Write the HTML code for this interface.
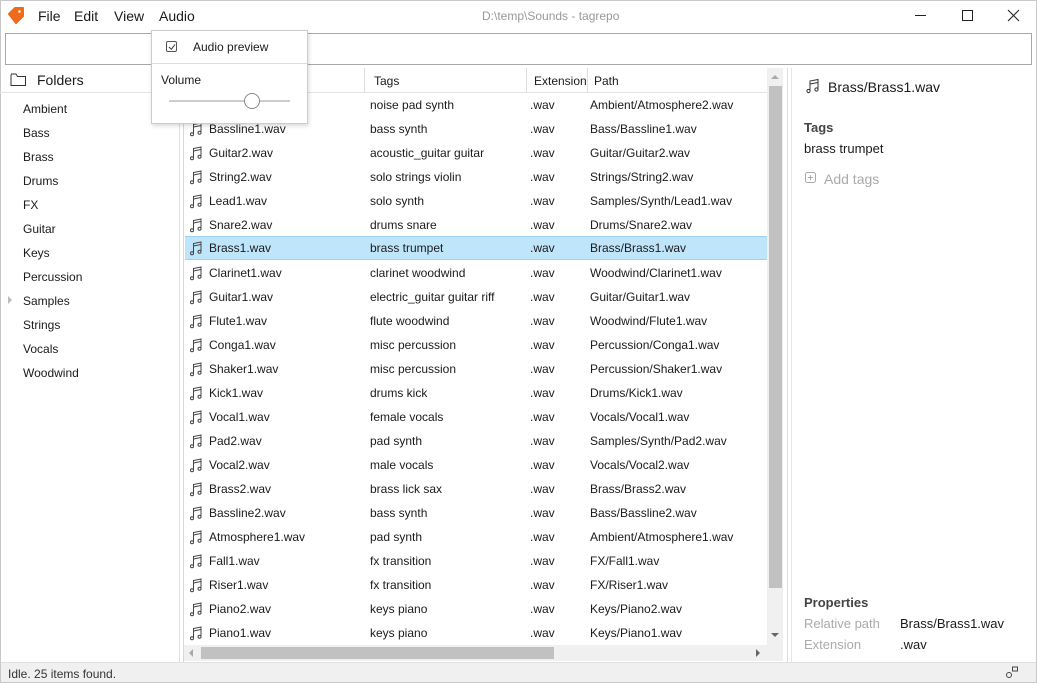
<!DOCTYPE html>
<html><head><meta charset="utf-8"><style>
*{margin:0;padding:0;box-sizing:border-box}
body{width:1037px;height:683px;background:#fff;font-family:"Liberation Sans","DejaVu Sans",sans-serif;color:#1a1a1a;position:relative;overflow:hidden;font-size:12px}
.a{position:absolute;white-space:nowrap}
.row{position:absolute;left:185px;width:582px;height:24px;line-height:24px}
.row span{position:absolute}
.sel{background:#bfe5fb;border-top:1px solid #9dd3f5;border-bottom:1px solid #9dd3f5;line-height:22px}
.ic{position:absolute;left:5px;top:5px}
.sel .ic{top:4px}
</style></head><body>
<div class="a" style="left:0;top:0;width:1037px;height:683px;border:1px solid #c8c8c8"></div>
<svg class="a" style="left:7px;top:7px" width="18" height="18" viewBox="0 0 18 18"><path d="M2 7 L8 1 L16 1 L16 9 L9 16 Z" fill="#f06a1c" stroke="#f06a1c" stroke-linejoin="round" stroke-width="2"/><circle cx="12.5" cy="4.5" r="1.3" fill="#fff"/></svg>
<div class="a" style="left:38px;top:8px;font-size:14px">File</div>
<div class="a" style="left:74px;top:8px;font-size:14px">Edit</div>
<div class="a" style="left:114px;top:8px;font-size:14px">View</div>
<div class="a" style="left:159px;top:8px;font-size:14px">Audio</div>
<div class="a" style="left:482px;top:9px;font-size:12px;color:#999">D:\temp\Sounds - tagrepo</div>
<div class="a" style="left:915px;top:15px;width:11px;height:1px;background:#222"></div>
<div class="a" style="left:962px;top:10px;width:11px;height:11px;border:1px solid #222"></div>
<svg class="a" style="left:1007px;top:9px" width="13" height="13"><path d="M1 1L12 12M12 1L1 12" stroke="#222" stroke-width="1.1"/></svg>
<div class="a" style="left:5px;top:33px;width:1027px;height:32px;border:1px solid #a8a8a8"></div>
<svg class="a" style="left:10px;top:72px" width="17" height="15"><path d="M1 3.5V13.5H15.5V4.5H7.5L6 2H1.5Z" fill="none" stroke="#333" stroke-width="1"/></svg>
<div class="a" style="left:37px;top:72px;font-size:14px">Folders</div>
<div class="a" style="left:0;top:92px;width:178px;height:1px;background:#e3e3e3"></div>
<div class="a" style="left:23px;top:97px;line-height:24px">Ambient<br>Bass<br>Brass<br>Drums<br>FX<br>Guitar<br>Keys<br>Percussion<br>Samples<br>Strings<br>Vocals<br>Woodwind</div>
<div class="a" style="left:8px;top:296px;width:0;height:0;border-left:4px solid #bbb;border-top:4px solid transparent;border-bottom:4px solid transparent"></div>
<div class="a" style="left:179px;top:68px;width:1px;height:594px;background:#e0e0e0"></div>
<div class="a" style="left:183px;top:68px;width:1px;height:594px;background:#d8d8d8"></div>
<div class="a" style="left:184px;top:92px;width:583px;height:1px;background:#e3e3e3"></div>
<div class="a" style="left:364px;top:68px;width:1px;height:24px;background:#ddd"></div>
<div class="a" style="left:526px;top:68px;width:1px;height:24px;background:#ddd"></div>
<div class="a" style="left:587px;top:68px;width:1px;height:24px;background:#ddd"></div>
<div class="a" style="left:374px;top:74px">Tags</div>
<div class="a" style="left:534px;top:74px">Extension</div>
<div class="a" style="left:594px;top:74px">Path</div>
<div id="rows"></div>
<div class="a" style="left:767px;top:68px;width:16px;height:577px;background:#f0f0f0"></div>
<div class="a" style="left:769px;top:86px;width:13px;height:502px;background:#c1c1c1"></div>
<div class="a" style="left:771px;top:75px;border-bottom:4px solid #aaa;border-left:4px solid transparent;border-right:4px solid transparent"></div>
<div class="a" style="left:771px;top:633px;border-top:4px solid #666;border-left:4px solid transparent;border-right:4px solid transparent"></div>
<div class="a" style="left:184px;top:645px;width:583px;height:16px;background:#f0f0f0"></div>
<div class="a" style="left:767px;top:645px;width:16px;height:16px;background:#f0f0f0"></div>
<div class="a" style="left:201px;top:647px;width:353px;height:12px;background:#c1c1c1"></div>
<div class="a" style="left:189px;top:649px;border-right:4px solid #aaa;border-top:4px solid transparent;border-bottom:4px solid transparent"></div>
<div class="a" style="left:756px;top:649px;border-left:4px solid #666;border-top:4px solid transparent;border-bottom:4px solid transparent"></div>
<div class="a" style="left:787px;top:68px;width:1px;height:594px;background:#ddd"></div>
<div class="a" style="left:791px;top:68px;width:1px;height:594px;background:#e6e6e6"></div>
<svg class="a" style="left:806px;top:78px" width="14" height="16" viewBox="0 0 14 16"><path d="M4 13V3L12 1.5V11M4 6L12 4.5" fill="none" stroke="#333"/><circle cx="2.5" cy="13" r="1.6" fill="none" stroke="#333"/><circle cx="10.5" cy="11.5" r="1.6" fill="none" stroke="#333"/></svg>
<div class="a" style="left:828px;top:79px;font-size:14px">Brass/Brass1.wav</div>
<div class="a" style="left:804px;top:120px;font-size:13px;font-weight:bold;color:#444">Tags</div>
<div class="a" style="left:804px;top:141px;font-size:13px">brass trumpet</div>
<svg class="a" style="left:805px;top:172px" width="13" height="13"><rect x="0.5" y="0.5" width="10" height="10" rx="2" fill="none" stroke="#aaa"/><path d="M5.5 3v5M3 5.5h5" stroke="#aaa"/></svg>
<div class="a" style="left:824px;top:171px;font-size:14px;color:#aaa">Add tags</div>
<div class="a" style="left:804px;top:595px;font-size:13px;font-weight:bold;color:#444">Properties</div>
<div class="a" style="left:804px;top:616px;font-size:13px;color:#aaa">Relative path</div>
<div class="a" style="left:900px;top:616px;font-size:13px">Brass/Brass1.wav</div>
<div class="a" style="left:804px;top:637px;font-size:13px;color:#aaa">Extension</div>
<div class="a" style="left:900px;top:637px;font-size:13px">.wav</div>
<div class="a" style="left:1px;top:662px;width:1035px;height:20px;background:#f0f0f0;border-top:1px solid #e0e0e0"></div>
<div class="a" style="left:8px;top:667px;color:#333">Idle. 25 items found.</div>
<svg class="a" style="left:1005px;top:665px" width="14" height="14"><circle cx="4" cy="10" r="2.5" fill="none" stroke="#444"/><rect x="7.5" y="2" width="5" height="4" fill="none" stroke="#444"/></svg>
<div class="a" style="left:151px;top:30px;width:157px;height:94px;background:#fff;border:1px solid #ccc;box-shadow:1px 2px 4px rgba(0,0,0,.15)"></div>
<div class="a" style="left:166px;top:41px;width:11px;height:11px;border:1px solid #555;border-radius:2px"></div>
<svg class="a" style="left:168px;top:43px" width="8" height="8"><path d="M1 4L3.3 6.3L7 1.5" fill="none" stroke="#333"/></svg>
<div class="a" style="left:193px;top:40px;font-size:12px">Audio preview</div>
<div class="a" style="left:152px;top:63px;width:155px;height:1px;background:#ddd"></div>
<div class="a" style="left:161px;top:73px">Volume</div>
<div class="a" style="left:169px;top:100px;width:121px;height:2px;background:#ccc"></div>
<div class="a" style="left:244px;top:93px;width:16px;height:16px;border-radius:50%;background:#fff;border:1px solid #888"></div>
<script>
var d=[["Atmosphere2.wav","noise pad synth","Ambient/Atmosphere2.wav"],["Bassline1.wav","bass synth","Bass/Bassline1.wav"],["Guitar2.wav","acoustic_guitar guitar","Guitar/Guitar2.wav"],["String2.wav","solo strings violin","Strings/String2.wav"],["Lead1.wav","solo synth","Samples/Synth/Lead1.wav"],["Snare2.wav","drums snare","Drums/Snare2.wav"],["Brass1.wav","brass trumpet","Brass/Brass1.wav"],["Clarinet1.wav","clarinet woodwind","Woodwind/Clarinet1.wav"],["Guitar1.wav","electric_guitar guitar riff","Guitar/Guitar1.wav"],["Flute1.wav","flute woodwind","Woodwind/Flute1.wav"],["Conga1.wav","misc percussion","Percussion/Conga1.wav"],["Shaker1.wav","misc percussion","Percussion/Shaker1.wav"],["Kick1.wav","drums kick","Drums/Kick1.wav"],["Vocal1.wav","female vocals","Vocals/Vocal1.wav"],["Pad2.wav","pad synth","Samples/Synth/Pad2.wav"],["Vocal2.wav","male vocals","Vocals/Vocal2.wav"],["Brass2.wav","brass lick sax","Brass/Brass2.wav"],["Bassline2.wav","bass synth","Bass/Bassline2.wav"],["Atmosphere1.wav","pad synth","Ambient/Atmosphere1.wav"],["Fall1.wav","fx transition","FX/Fall1.wav"],["Riser1.wav","fx transition","FX/Riser1.wav"],["Piano2.wav","keys piano","Keys/Piano2.wav"],["Piano1.wav","keys piano","Keys/Piano1.wav"]];
var ic='<svg class="ic" width="13" height="15" viewBox="0 0 13 15"><path d="M3.5 12V2.5L11 1V10.5M3.5 5L11 3.5" fill="none" stroke="#444"/><circle cx="2" cy="12.3" r="1.5" fill="none" stroke="#444"/><circle cx="9.5" cy="10.8" r="1.5" fill="none" stroke="#444"/></svg>';
var h='';d.forEach(function(r,i){h+='<div class="row'+(i==6?' sel':'')+'" style="top:'+(i==6?236:(93+i*24))+'px">'+ic+'<span style="left:24px">'+r[0]+'</span><span style="left:185px">'+r[1]+'</span><span style="left:345px">.wav</span><span style="left:405px">'+r[2]+'</span></div>'});
document.getElementById('rows').innerHTML=h;
</script>
</body></html>
